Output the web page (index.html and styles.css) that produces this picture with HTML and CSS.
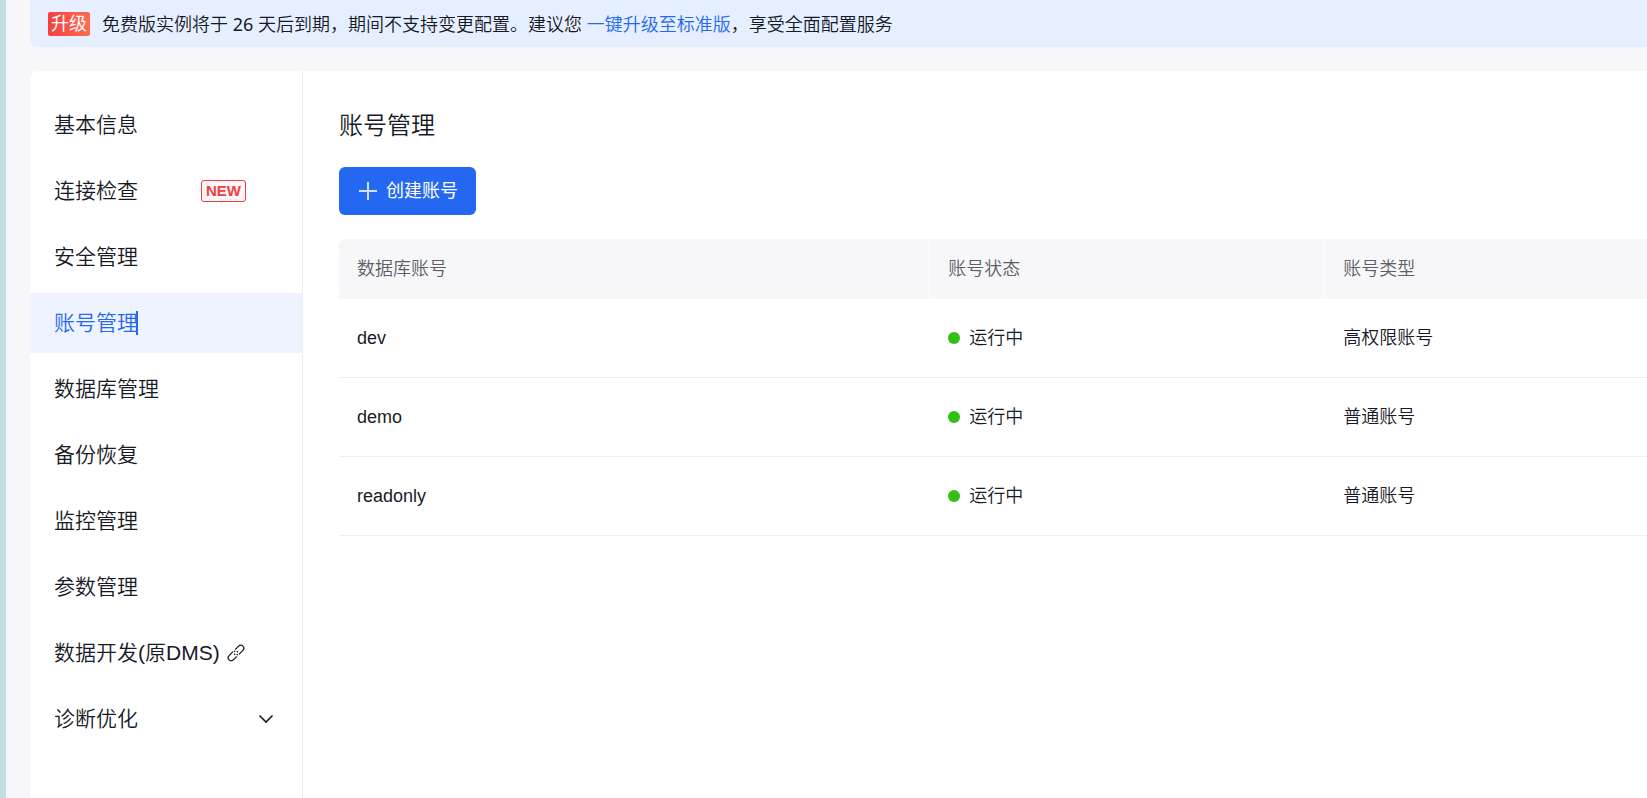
FILE: index.html
```html
<!DOCTYPE html>
<html lang="zh-CN">
<head>
<meta charset="utf-8">
<title>账号管理</title>
<link rel="stylesheet" href="styles.css">
</head>
<body>
<div class="page">
  <div class="banner">
    <span class="banner-tag">升级</span>
    <p class="banner-text">免费版实例将于<span class="days"> 26 </span>天后到期，期间不支持变更配置。建议您 <a href="#">一键升级至标准版</a>，享受全面配置服务</p>
  </div>
  <div class="card">
    <nav class="sidebar">
      <a class="item" href="#">基本信息</a>
      <a class="item" href="#">连接检查<span class="new">NEW</span></a>
      <a class="item" href="#">安全管理</a>
      <a class="item active" href="#"><span class="caret">账号管理</span></a>
      <a class="item" href="#">数据库管理</a>
      <a class="item" href="#">备份恢复</a>
      <a class="item" href="#">监控管理</a>
      <a class="item" href="#">参数管理</a>
      <a class="item" href="#">数据开发(原DMS)<svg class="link-icon" viewBox="0 0 18 18" width="18" height="18"><path d="M8.200 5.600l3.400-3.500a2.900 2.900 0 0 1 4.300 0a3.100 3.100 0 0 1 0 4.300l-3.900 4M9.800 12.400l-3.400 3.500a2.900 2.900 0 0 1-4.300 0a3.100 3.100 0 0 1 0-4.300l3.900-4M7.200 10.800l1-1M9.800 8.200l1-1M11 10.900l-1.300-.6M7 7.100l1.300.6"/></svg></a>
      <a class="item" href="#">诊断优化<svg class="chevron" viewBox="0 0 16 16" width="16" height="16"><path d="M1.500 4.500L8 11l6.500-6.500"/></svg></a>
    </nav>
    <main class="main">
      <h1>账号管理</h1>
      <button class="create" type="button"><svg viewBox="0 0 18 18" width="18" height="18"><path d="M0 9h18M9 0v18"/></svg>创建账号</button>
      <table>
        <thead>
          <tr><th class="col-name">数据库账号</th><th class="col-status">账号状态</th><th>账号类型</th></tr>
        </thead>
        <tbody>
          <tr><td>dev</td><td><span class="status">运行中</span></td><td>高权限账号</td></tr>
          <tr><td>demo</td><td><span class="status">运行中</span></td><td>普通账号</td></tr>
          <tr><td>readonly</td><td><span class="status">运行中</span></td><td>普通账号</td></tr>
        </tbody>
      </table>
    </main>
  </div>
</div>
</body>
</html>
```

FILE: styles.css
```css
* { box-sizing: border-box; }
body {
  margin: 0;
  background: #f7f7fa;
  color: #171a26;
  font: 350 18px/24px "Liberation Sans", "Noto Sans CJK SC", sans-serif;
}
a { color: inherit; text-decoration: none; }
.page {
  display: flex;
  flex-direction: column;
  gap: 24px;
  min-height: 100vh;
  padding-left: 24px;
  border-left: 6px solid #c5dee1;
}
.banner {
  display: flex;
  align-items: center;
  gap: 12px;
  height: 47px;
  padding: 0 18px;
  border-radius: 0 0 0 6px;
  background: #e6efff;
}
.banner-tag {
  padding: 0 3px;
  border-radius: 2px;
  background: linear-gradient(90deg, #f53f3f, #ff6a55);
  color: #fff;
  font-weight: 400;
}
.banner-text {
  margin: 0;
  font-family: "Noto Sans", "Noto Sans CJK SC", sans-serif;
}
.banner-text a { color: #2468f2; }
.days { font-weight: 400; }
.card {
  display: flex;
  flex: 1;
  border-radius: 8px 0 0 0;
  background: #fff;
}
.sidebar {
  display: flex;
  flex: none;
  flex-direction: column;
  gap: 6px;
  width: 273px;
  padding-top: 24px;
  border-right: 1px solid #eeeff2;
}
.item {
  display: flex;
  align-items: center;
  height: 60px;
  padding: 0 28px 0 24px;
  font-size: 21px;
}
.active { background: #eef3ff; color: #2468f2; }
.caret { position: relative; }
.caret::after {
  content: "";
  position: absolute;
  top: 0;
  right: 0;
  width: 2px;
  height: 24px;
  background: #2468f2;
}
.new {
  margin-left: 63px;
  padding: 0 4px;
  border: 1px solid #f33e3e;
  border-radius: 3px;
  background: #f7f7fa;
  color: #f33e3e;
  font-size: 15px;
  font-weight: 700;
  line-height: 20px;
}
svg { flex: none; fill: none; stroke: currentColor; }
.link-icon { margin-left: 7px; stroke-width: 1.3; }
.chevron { margin-left: auto; stroke-width: 1.6; }
.main { flex: 1; padding: 37px 0 36px 36px; }
h1 {
  margin: 0 0 23px;
  font-size: 24px;
  font-weight: 350;
  line-height: 36px;
}
.create {
  display: flex;
  align-items: center;
  gap: 9px;
  height: 48px;
  margin-bottom: 24px;
  padding: 0 18px 0 20px;
  border: 0;
  border-radius: 6px;
  background: #2468f2;
  color: #fff;
  font: inherit;
  font-weight: 400;
}
.create svg { stroke-width: 2; stroke: #d3e1fc; }
table {
  width: 100%;
  table-layout: fixed;
  border-collapse: separate;
  border-spacing: 0;
}
th, td { padding: 0 18px; text-align: left; }
th {
  height: 60px;
  border-right: 1px solid #fff;
  background: #f7f7fa;
  color: #5c5f66;
  font-weight: 350;
}
th:first-child { border-radius: 6px 0 0 0; }
th:last-child { border-right: 0; }
.col-name { width: 45.2%; }
.col-status { width: 30.2%; }
td { height: 79px; border-bottom: 1px solid #eeeff2; }
.status { display: flex; align-items: center; gap: 9px; }
.status::before {
  content: "";
  width: 12px;
  height: 12px;
  border-radius: 50%;
  background: #30bf13;
}
```
